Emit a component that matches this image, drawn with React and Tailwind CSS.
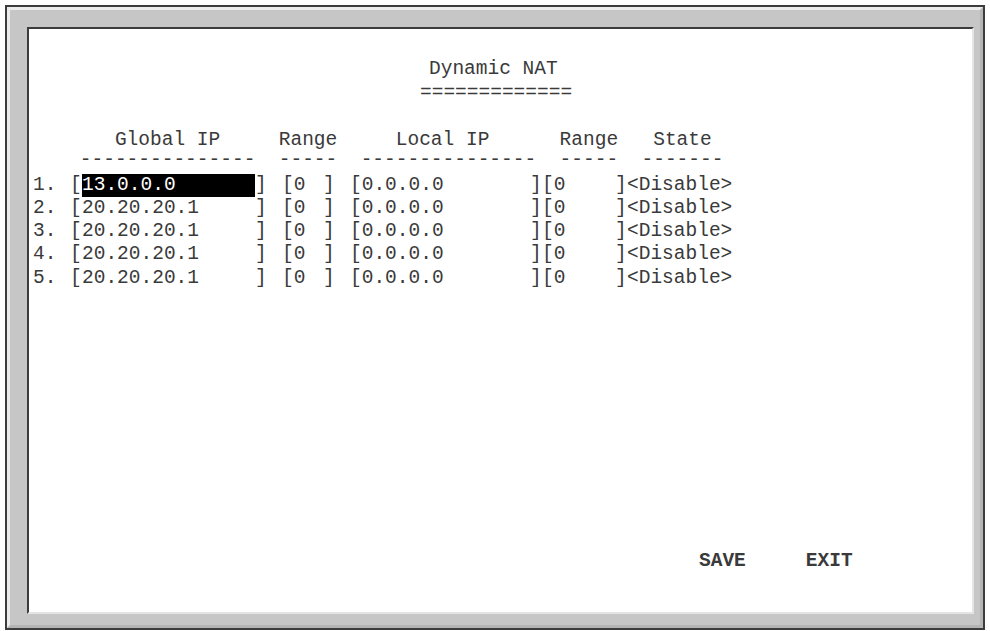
const rows = [
  { n: "1.", ip: "13.0.0.0", active: true },
  { n: "2.", ip: "20.20.20.1" },
  { n: "3.", ip: "20.20.20.1" },
  { n: "4.", ip: "20.20.20.1" },
  { n: "5.", ip: "20.20.20.1" },
];

// brackets get their own cells so the odd terminal spacing can be matched
function NatRow({ n, ip, active }) {
  return (
    <div className="flex h-[23.3px] leading-[23.3px] whitespace-pre">
      <span className="w-[37px] shrink-0">{n}</span>
      <span className="w-[12px] shrink-0">[</span>
      <span
        className={
          active
            ? "w-[173px] shrink-0 bg-black text-white"
            : "w-[173px] shrink-0"
        }
      >
        {ip}
      </span>
      <span className="w-[27px] shrink-0">]</span>
      <span className="w-[41px] shrink-0">[0</span>
      <span className="w-[27px] shrink-0">]</span>
      <span className="w-[180px] shrink-0">[0.0.0.0</span>
      <span className="w-[12px] shrink-0">]</span>
      <span className="w-[73px] shrink-0">[0</span>
      <span className="w-[12px] shrink-0">]</span>
      <span className="shrink-0">{"<Disable>"}</span>
    </div>
  );
}

export default function App() {
  return (
    <div className="w-[990px] h-[631px] bg-white pt-[5px] pl-[5px] font-['Liberation_Mono',monospace] text-[19.5px] text-[#3a3a3a]">
      <div className="w-[980px] h-[625px] border-2 border-[#3c3c3c] bg-[#c6c6c6]">
        <div className="h-full border-[3px] border-t-[#ececec] border-l-[#ececec] border-r-[#b4b4b4] border-b-[#b4b4b4] pl-[17px] pt-[17px] pr-[6px] pb-[11px]">
          <div className="h-[587px] border-2 border-t-[#3c3c3c] border-l-[#3c3c3c] border-r-[#e4e4e4] border-b-[#e4e4e4] bg-white">
            <div className="flex flex-col h-full pl-[4px] pb-[39px]">
              <div className="mt-[29px] h-[23px] leading-[23px] pl-[396px] whitespace-pre">
                Dynamic NAT
              </div>
              <div className="mt-[3px] h-[19px] leading-[19px] pl-[387px] whitespace-pre">
                =============
              </div>
              <div className="mt-[25.5px] h-[23px] leading-[23px] whitespace-pre">
                {"       Global IP     Range     Local IP      Range   State"}
              </div>
              <div className="h-[16px] leading-[16px] whitespace-pre">
                {"    ---------------  -----  ---------------  -----  -------"}
              </div>
              <div className="mt-[6px] flex flex-col">
                {rows.map((r, key) => (
                  <NatRow key={key} {...r} />
                ))}
              </div>
              <div className="mt-auto flex h-[23px] leading-[23px] pl-[666px] gap-[60px] font-bold">
                <span>SAVE</span>
                <span>EXIT</span>
              </div>
            </div>
          </div>
        </div>
      </div>
    </div>
  );
}
